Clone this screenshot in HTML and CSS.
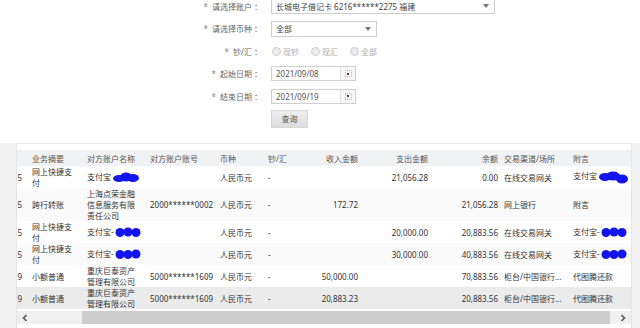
FILE: index.html
```html
<!DOCTYPE html>
<html lang="zh">
<head>
<meta charset="utf-8">
<link rel="stylesheet" href="styles.css">
</head>
<body>
<div class="top">
  <div class="form">
    <div class="lbl"><span class="star">*</span>请选择账户 ：</div>
    <div class="sel sel-wide"><span>长城电子借记卡 6216******2275 福建</span><i class="arrow"></i></div>

    <div class="lbl"><span class="star">*</span>请选择币种 ：</div>
    <div class="sel sel-narrow"><span>全部</span><i class="arrow"></i></div>

    <div class="lbl"><span class="star">*</span>钞/汇 ：</div>
    <div class="radios">
      <span class="radio"></span><span class="rtext">现钞</span>
      <span class="radio"></span><span class="rtext">现汇</span>
      <span class="radio"></span><span class="rtext">全部</span>
    </div>

    <div class="lbl"><span class="star">*</span>起始日期 ：</div>
    <div class="date"><span>2021/09/08</span><span class="cal"><i></i></span></div>

    <div class="lbl"><span class="star">*</span>结束日期 ：</div>
    <div class="date"><span>2021/09/19</span><span class="cal"><i></i></span></div>

    <div></div>
    <div><span class="btn">查询</span></div>
  </div>
</div>

<div class="panel">
  <div class="tv">
    <table>
      <colgroup>
        <col class="c0"><col class="c1"><col class="c2"><col class="c3"><col class="c4"><col class="c5"><col class="c6"><col class="c7"><col class="c8"><col class="c9"><col class="c10">
      </colgroup>
      <thead>
        <tr>
          <th class="d"></th><th>业务摘要</th><th>对方账户名称</th><th>对方账户账号</th><th>币种</th><th>钞/汇</th><th class="n">收入金额</th><th class="n">支出金额</th><th class="n">余额</th><th class="ch">交易渠道/场所</th><th>附言</th>
        </tr>
      </thead>
      <tbody>
        <tr>
          <td class="d">09/15</td><td>网上快捷支付</td><td>支付宝<svg class="blob" width="28" height="11" viewBox="0 0 28 11"><ellipse cx="7" cy="6.5" rx="6" ry="3.5"/><ellipse cx="14" cy="5" rx="6" ry="4.5"/><ellipse cx="21" cy="6" rx="6" ry="4"/></svg></td><td></td><td>人民币元</td><td>-</td><td class="n"></td><td class="n">21,056.28</td><td class="n">0.00</td><td class="ch">在线交易网关</td><td class="nw">支付宝<svg class="blob" width="32" height="13" viewBox="0 0 32 13"><ellipse cx="7" cy="6" rx="6" ry="4"/><ellipse cx="15" cy="5" rx="7" ry="4.5"/><ellipse cx="24" cy="8" rx="6" ry="4.5"/></svg></td>
        </tr>
        <tr>
          <td class="d">09/15</td><td>跨行转账</td><td>上海点荣金融信息服务有限责任公司</td><td class="nw">2000******0002</td><td>人民币元</td><td>-</td><td class="n">172.72</td><td class="n"></td><td class="n">21,056.28</td><td class="ch">网上银行</td><td>附言</td>
        </tr>
        <tr>
          <td class="d">09/15</td><td>网上快捷支付</td><td class="nw">支付宝-<svg class="blob" width="26" height="11" viewBox="0 0 26 11"><circle cx="5" cy="5.5" r="4.5"/><circle cx="13" cy="5" r="4.5"/><circle cx="21" cy="5.5" r="4.5"/></svg></td><td></td><td>人民币元</td><td>-</td><td class="n"></td><td class="n">20,000.00</td><td class="n">20,883.56</td><td class="ch">在线交易网关</td><td class="nw">支付宝-<svg class="blob" width="26" height="11" viewBox="0 0 26 11"><circle cx="5" cy="5.5" r="4.5"/><circle cx="13" cy="5" r="4.5"/><circle cx="21" cy="5.5" r="4.5"/></svg></td>
        </tr>
        <tr>
          <td class="d">09/15</td><td>网上快捷支付</td><td class="nw">支付宝-<svg class="blob" width="26" height="11" viewBox="0 0 26 11"><circle cx="5" cy="5.5" r="4.5"/><circle cx="13" cy="5.5" r="4.5"/><circle cx="21" cy="5" r="4.5"/></svg></td><td></td><td>人民币元</td><td>-</td><td class="n"></td><td class="n">30,000.00</td><td class="n">40,883.56</td><td class="ch">在线交易网关</td><td class="nw">支付宝-<svg class="blob" width="26" height="11" viewBox="0 0 26 11"><circle cx="5" cy="5.5" r="4.5"/><circle cx="13" cy="5.5" r="4.5"/><circle cx="21" cy="5" r="4.5"/></svg></td>
        </tr>
        <tr>
          <td class="d">09/19</td><td>小额普通</td><td>重庆巨泰资产管理有限公司</td><td class="nw">5000******1609</td><td>人民币元</td><td>-</td><td class="n">50,000.00</td><td class="n"></td><td class="n">70,883.56</td><td class="ch">柜台/中国银行...</td><td>代图腾还款</td>
        </tr>
        <tr class="hover">
          <td class="d">09/19</td><td>小额普通</td><td>重庆巨泰资产管理有限公司</td><td class="nw">5000******1609</td><td>人民币元</td><td>-</td><td class="n">20,883.23</td><td class="n"></td><td class="n">20,883.56</td><td class="ch">柜台/中国银行...</td><td>代图腾还款</td>
        </tr>
      </tbody>
    </table>
  </div>
  <div class="hscroll">
    <span class="sbtn"><svg width="8" height="8" viewBox="0 0 8 8"><polyline points="5.5,1 2.5,4 5.5,7" /></svg></span>
    <span class="track"><span class="thumb"></span></span>
    <span class="sbtn"><svg width="8" height="8" viewBox="0 0 8 8"><polyline points="2.5,1 5.5,4 2.5,7" /></svg></span>
  </div>
</div>
</body>
</html>
```
FILE: styles.css
```css
html, body {
  margin: 0;
  padding: 0;
}
body {
  width: 640px;
  height: 328px;
  overflow: hidden;
  background: #f4f4f4;
  font-family: "Noto Sans", "Noto Sans CJK SC", sans-serif;
  font-size: 8px;
  color: #333;
}
.top {
  background: #fff;
  height: 143px;
  overflow: hidden;
}
.form {
  display: grid;
  grid-template-columns: 262px 1fr;
  column-gap: 9px;
  grid-auto-rows: 22.6px;
  align-items: center;
  margin-top: -5.3px;
}
.lbl {
  text-align: right;
  color: #666;
  white-space: pre;
}
.star {
  color: #888;
  margin-right: 4px;
}
.sel {
  height: 16px;
  box-sizing: border-box;
  border: 1px solid #cfcfcf;
  display: flex;
  align-items: center;
  justify-content: space-between;
  padding: 0 4px;
  color: #444;
  background: #fff;
}
.sel-wide { width: 224px; }
.sel-narrow { width: 106px; }
.arrow {
  width: 0;
  height: 0;
  border-left: 3px solid transparent;
  border-right: 3px solid transparent;
  border-top: 4px solid #777;
  margin-right: 1px;
}
.radios {
  display: flex;
  align-items: center;
  color: #aaa;
}
.radio {
  width: 9px;
  height: 9px;
  box-sizing: border-box;
  border-radius: 50%;
  border: 1px solid #cfcfcf;
  background: #ececec;
  margin-left: 1px;
  margin-right: 2px;
}
.rtext {
  margin-right: 11px;
}
.date {
  width: 85px;
  height: 15px;
  box-sizing: border-box;
  border: 1px solid #cfcfcf;
  display: flex;
  align-items: center;
  justify-content: space-between;
  padding-left: 4px;
  color: #555;
}
.cal {
  width: 14px;
  height: 13px;
  border-left: 1px solid #e3e3e3;
  background: #f7f7f7;
  display: flex;
  align-items: center;
  justify-content: center;
}
.cal i {
  width: 7px;
  height: 7px;
  box-sizing: border-box;
  border: 1px dotted #e4a8a8;
  display: flex;
  align-items: center;
  justify-content: center;
}
.cal i::before {
  content: "";
  width: 2px;
  height: 2px;
  background: #7a2a2a;
}
.btn {
  display: inline-flex;
  width: 37px;
  height: 18px;
  box-sizing: border-box;
  align-items: center;
  justify-content: center;
  background: linear-gradient(#f0f0f0, #dcdcdc);
  border: 1px solid #d8d8d8;
  color: #555;
  vertical-align: middle;
}
.panel {
  margin-left: 16px;
  width: 616px;
  height: 200px;
  box-sizing: border-box;
  background: #fff;
  border: 1px solid #e6e6e6;
  padding-top: 6px;
}
.tv {
  overflow: hidden;
}
table {
  border-collapse: collapse;
  table-layout: fixed;
  width: 681px;
  margin-left: -49px;
}
.c0 { width: 60px; }
.c1 { width: 55px; }
.c2 { width: 63px; }
.c3 { width: 70px; }
.c4 { width: 48px; }
.c5 { width: 36px; }
.c6 { width: 61px; }
.c7 { width: 70px; }
.c8 { width: 70px; }
.c9 { width: 68px; }
.c10 { width: 80px; }
th, td {
  padding: 0 4px;
  text-align: left;
  vertical-align: middle;
  font-weight: normal;
  line-height: 11px;
  overflow: hidden;
}
thead tr {
  height: 16px;
  background: #f1f2f4;
  color: #555;
}
tbody tr {
  height: 22px;
  background: #fff;
}
tbody tr:nth-child(even) {
  background: #fafafa;
}
tbody tr.hover {
  background: #ebebeb;
}
th.n, td.n {
  text-align: right;
  padding: 0 3px 0 0;
}
th.ch, td.ch {
  padding-left: 3px;
  white-space: nowrap;
}
td.d {
  text-align: right;
  padding-right: 6px;
  white-space: nowrap;
}
.nw {
  white-space: nowrap;
}
.blob {
  vertical-align: middle;
  fill: #1414ee;
  margin-left: 1px;
}
.hscroll {
  display: flex;
  height: 13px;
  margin-top: 2px;
  background: #f0f0f0;
}
.sbtn {
  width: 16px;
  display: flex;
  align-items: center;
  justify-content: center;
}
.sbtn svg {
  fill: none;
  stroke: #555;
  stroke-width: 1.6;
}
.track {
  flex: 1;
  display: flex;
  padding: 0 5px 0 49px;
}
.thumb {
  flex: 1;
  background: #cdcdcd;
}
```
